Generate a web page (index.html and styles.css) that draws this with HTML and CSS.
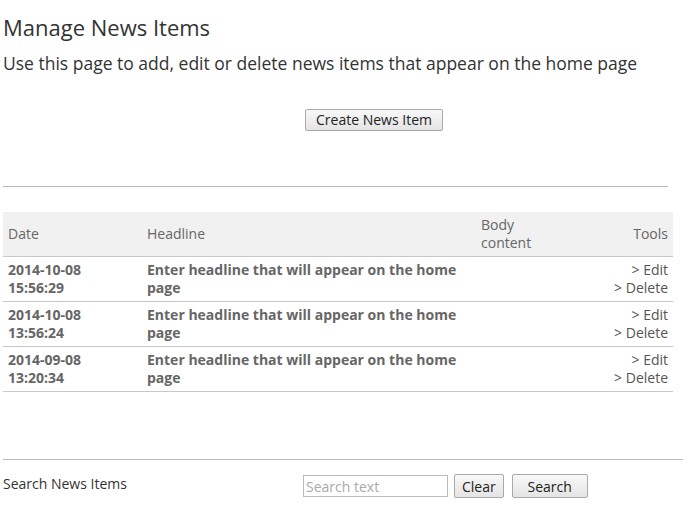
FILE: index.html
```html
<!DOCTYPE html>
<html lang="en">
<head>
    <meta charset="UTF-8">
    <title>Manage News Items</title>
    <link rel="stylesheet" href="styles.css">
</head>
<body>
    <div class="page">
        <h1 class="page-title">Manage News Items</h1>
        <p class="page-intro">Use this page to add, edit or delete news items that appear on the home page</p>

        <div class="create-row">
            <button class="btn">Create News Item</button>
        </div>

        <hr class="rule rule-top">

        <table class="news-table">
            <thead>
                <tr>
                    <th class="col-date">Date</th>
                    <th class="col-headline">Headline</th>
                    <th class="col-body">Body<br>content</th>
                    <th class="col-tools">Tools</th>
                </tr>
            </thead>
            <tbody>
                <tr>
                    <td class="col-date">2014-10-08<br>15:56:29</td>
                    <td class="col-headline">Enter headline that will appear on the home page</td>
                    <td class="col-body"></td>
                    <td class="col-tools"><a href="#">&gt; Edit</a><br><a href="#">&gt; Delete</a></td>
                </tr>
                <tr>
                    <td class="col-date">2014-10-08<br>13:56:24</td>
                    <td class="col-headline">Enter headline that will appear on the home page</td>
                    <td class="col-body"></td>
                    <td class="col-tools"><a href="#">&gt; Edit</a><br><a href="#">&gt; Delete</a></td>
                </tr>
                <tr>
                    <td class="col-date">2014-09-08<br>13:20:34</td>
                    <td class="col-headline">Enter headline that will appear on the home page</td>
                    <td class="col-body"></td>
                    <td class="col-tools"><a href="#">&gt; Edit</a><br><a href="#">&gt; Delete</a></td>
                </tr>
            </tbody>
        </table>

        <hr class="rule rule-bottom">

        <div class="search-bar">
            <div class="search-label">Search News Items</div>
            <div class="search-controls">
                <input type="text" class="search-input" placeholder="Search text">
                <button class="btn btn-clear">Clear</button>
                <button class="btn btn-search">Search</button>
            </div>
        </div>
    </div>
</body>
</html>
```

FILE: styles.css
```css
* {
    margin: 0;
    padding: 0;
    box-sizing: border-box;
}

body {
    font-family: 'Open Sans', 'DejaVu Sans', sans-serif;
    color: #333;
    background: #fff;
}

.page {
    padding: 12px 3px 0;
}

/* Heading */
.page-title {
    font-size: 22px;
    font-weight: normal;
    line-height: 30px;
    color: #333;
}

.page-intro {
    font-size: 17.5px;
    line-height: 24px;
    margin-top: 9px;
    color: #333;
}

.create-row {
    padding-left: 302px;
    margin-top: 33px;
}

/* Buttons */
.btn {
    font-family: inherit;
    font-size: 14px;
    color: #222;
    height: 22px;
    padding: 0 10px;
    border: 1px solid #a9a9a9;
    border-radius: 2px;
    background: linear-gradient(#f8f8f8, #e4e4e4);
    cursor: pointer;
}

/* Rules */
.rule {
    border: none;
    border-top: 1px solid #bbb;
}

.rule-top {
    width: 665px;
    margin-top: 55px;
}

.rule-bottom {
    width: 680px;
    margin-top: 67px;
}

/* Table */
.news-table {
    width: 670px;
    margin-top: 25px;
    border-collapse: collapse;
    font-size: 14px;
    line-height: 18px;
    color: #666;
}

.news-table th {
    background: #f1f1f1;
    font-weight: normal;
    text-align: left;
    padding: 4px 5px;
    height: 45px;
    border-bottom: 1px solid #c8c8c8;
}

.news-table td {
    font-weight: bold;
    padding: 4px 5px;
    height: 45px;
    vertical-align: top;
    border-bottom: 1px solid #c8c8c8;
}

.col-date {
    width: 139px;
}

.col-headline {
    width: 334px;
}

.col-body {
    width: 110px;
}

.news-table .col-tools {
    text-align: right;
}

.news-table td.col-tools a {
    font-weight: normal;
    color: #555;
    text-decoration: none;
}

/* Search */
.search-bar {
    display: flex;
    align-items: flex-start;
    margin-top: 14px;
}

.search-label {
    width: 300px;
    font-size: 14px;
    line-height: 20px;
    color: #333;
}

.search-controls {
    display: flex;
    align-items: center;
    gap: 6px;
}

.search-input {
    font-family: inherit;
    font-size: 14px;
    width: 145px;
    height: 22px;
    padding: 0 2px;
    border: 1px solid #bbb;
    color: #333;
}

.search-input::placeholder {
    color: #aaa;
}

.btn-clear {
    height: 24px;
    padding: 0 7px;
}

.btn-search {
    height: 24px;
    width: 76px;
    margin-left: 2px;
}
```
